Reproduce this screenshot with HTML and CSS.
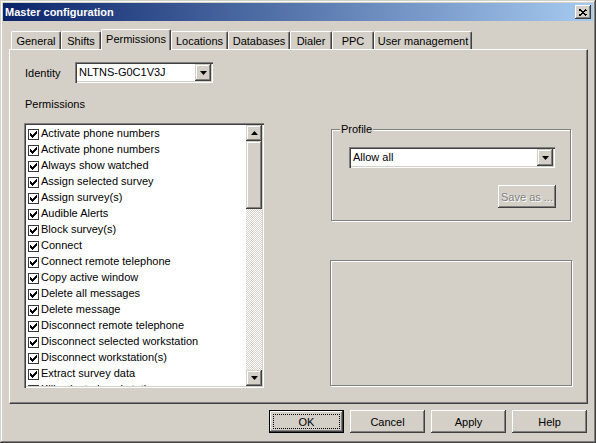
FILE: index.html
```html
<!DOCTYPE html>
<html>
<head>
<meta charset="utf-8">
<title>Master configuration</title>
<link rel="stylesheet" href="styles.css">
</head>
<body>
<div class="window">
  <div class="titlebar">
    <span class="title">Master configuration</span>
    <div class="close">
      <svg width="8" height="7" viewBox="0 0 8 7"><path d="M0.5 0.5 L7.5 6.5 M7.5 0.5 L0.5 6.5" stroke="#000" stroke-width="1.6" fill="none"/></svg>
    </div>
  </div>
  <div class="body">
    <div class="tabs">
      <div class="tab w-general">General</div>
      <div class="tab w-shifts">Shifts</div>
      <div class="tab active w-perm">Permissions</div>
      <div class="tab w-loc">Locations</div>
      <div class="tab w-db">Databases</div>
      <div class="tab w-dialer">Dialer</div>
      <div class="tab w-ppc">PPC</div>
      <div class="tab w-user">User management</div>
    </div>
    <div class="panel">
      <div class="left">
        <div class="identity">
          <span class="lbl">Identity</span>
          <div class="combo combo-id">
            <span class="val">NLTNS-G0C1V3J</span>
            <span class="drop"><svg width="7" height="4" viewBox="0 0 7 4"><polygon points="0,0 7,0 3.5,4" fill="#000"/></svg></span>
          </div>
        </div>
        <div class="perm-label">Permissions</div>
        <div class="listbox">
          <ul class="items">
            <li class="item"><span class="cb"><svg width="7" height="7" viewBox="0 0 7 7"><polygon points="0,2 2,4 7,-1 7,2 2,7 0,5" fill="#000"/></svg></span>Activate phone numbers</li>
            <li class="item"><span class="cb"><svg width="7" height="7" viewBox="0 0 7 7"><polygon points="0,2 2,4 7,-1 7,2 2,7 0,5" fill="#000"/></svg></span>Activate phone numbers</li>
            <li class="item"><span class="cb"><svg width="7" height="7" viewBox="0 0 7 7"><polygon points="0,2 2,4 7,-1 7,2 2,7 0,5" fill="#000"/></svg></span>Always show watched</li>
            <li class="item"><span class="cb"><svg width="7" height="7" viewBox="0 0 7 7"><polygon points="0,2 2,4 7,-1 7,2 2,7 0,5" fill="#000"/></svg></span>Assign selected survey</li>
            <li class="item"><span class="cb"><svg width="7" height="7" viewBox="0 0 7 7"><polygon points="0,2 2,4 7,-1 7,2 2,7 0,5" fill="#000"/></svg></span>Assign survey(s)</li>
            <li class="item"><span class="cb"><svg width="7" height="7" viewBox="0 0 7 7"><polygon points="0,2 2,4 7,-1 7,2 2,7 0,5" fill="#000"/></svg></span>Audible Alerts</li>
            <li class="item"><span class="cb"><svg width="7" height="7" viewBox="0 0 7 7"><polygon points="0,2 2,4 7,-1 7,2 2,7 0,5" fill="#000"/></svg></span>Block survey(s)</li>
            <li class="item"><span class="cb"><svg width="7" height="7" viewBox="0 0 7 7"><polygon points="0,2 2,4 7,-1 7,2 2,7 0,5" fill="#000"/></svg></span>Connect</li>
            <li class="item"><span class="cb"><svg width="7" height="7" viewBox="0 0 7 7"><polygon points="0,2 2,4 7,-1 7,2 2,7 0,5" fill="#000"/></svg></span>Connect remote telephone</li>
            <li class="item"><span class="cb"><svg width="7" height="7" viewBox="0 0 7 7"><polygon points="0,2 2,4 7,-1 7,2 2,7 0,5" fill="#000"/></svg></span>Copy active window</li>
            <li class="item"><span class="cb"><svg width="7" height="7" viewBox="0 0 7 7"><polygon points="0,2 2,4 7,-1 7,2 2,7 0,5" fill="#000"/></svg></span>Delete all messages</li>
            <li class="item"><span class="cb"><svg width="7" height="7" viewBox="0 0 7 7"><polygon points="0,2 2,4 7,-1 7,2 2,7 0,5" fill="#000"/></svg></span>Delete message</li>
            <li class="item"><span class="cb"><svg width="7" height="7" viewBox="0 0 7 7"><polygon points="0,2 2,4 7,-1 7,2 2,7 0,5" fill="#000"/></svg></span>Disconnect remote telephone</li>
            <li class="item"><span class="cb"><svg width="7" height="7" viewBox="0 0 7 7"><polygon points="0,2 2,4 7,-1 7,2 2,7 0,5" fill="#000"/></svg></span>Disconnect selected workstation</li>
            <li class="item"><span class="cb"><svg width="7" height="7" viewBox="0 0 7 7"><polygon points="0,2 2,4 7,-1 7,2 2,7 0,5" fill="#000"/></svg></span>Disconnect workstation(s)</li>
            <li class="item"><span class="cb"><svg width="7" height="7" viewBox="0 0 7 7"><polygon points="0,2 2,4 7,-1 7,2 2,7 0,5" fill="#000"/></svg></span>Extract survey data</li>
            <li class="item"><span class="cb"><svg width="7" height="7" viewBox="0 0 7 7"><polygon points="0,2 2,4 7,-1 7,2 2,7 0,5" fill="#000"/></svg></span>Kill selected workstation</li>
          </ul>
          <div class="scroll">
            <div class="sbtn"><svg width="7" height="4" viewBox="0 0 7 4"><polygon points="0,4 7,4 3.5,0" fill="#000"/></svg></div>
            <div class="thumb"></div>
            <div class="track"></div>
            <div class="sbtn"><svg width="7" height="4" viewBox="0 0 7 4"><polygon points="0,0 7,0 3.5,4" fill="#000"/></svg></div>
          </div>
        </div>
      </div>
      <div class="right">
        <fieldset class="group">
          <legend>Profile</legend>
          <div class="group-inner">
            <div class="combo combo-profile">
              <span class="val">Allow all</span>
              <span class="drop"><svg width="7" height="4" viewBox="0 0 7 4"><polygon points="0,0 7,0 3.5,4" fill="#000"/></svg></span>
            </div>
            <div class="btn btn-save disabled">Save as ...</div>
          </div>
        </fieldset>
        <div class="etched"></div>
      </div>
    </div>
    <div class="buttons">
      <div class="btn default"><span class="focus">OK</span></div>
      <div class="btn">Cancel</div>
      <div class="btn">Apply</div>
      <div class="btn">Help</div>
    </div>
  </div>
</div>
</body>
</html>
```

FILE: styles.css
```css
* { box-sizing: border-box; }
html, body { margin: 0; padding: 0; }
body {
  width: 596px;
  height: 443px;
  overflow: hidden;
  background: #d4d0c8;
  font: 11px "Liberation Sans", Arial, sans-serif;
  color: #000;
}

.window {
  width: 596px;
  height: 443px;
  padding: 3px;
  display: flex;
  flex-direction: column;
  background: #d4d0c8;
  box-shadow: inset -1px -1px #404040, inset 1px 1px #d4d0c8, inset -2px -2px #808080, inset 2px 2px #fff;
}

.titlebar {
  height: 18px;
  flex: none;
  display: flex;
  align-items: center;
  padding: 0 2px;
  background: linear-gradient(to right, #0a246a, #a6caf0);
}
.title {
  flex: 1;
  color: #fff;
  font-weight: bold;
  line-height: 18px;
}
.close {
  width: 16px;
  height: 14px;
  display: flex;
  align-items: center;
  justify-content: center;
  background: #d4d0c8;
  box-shadow: inset -1px -1px #404040, inset 1px 1px #fff, inset -2px -2px #808080, inset 2px 2px #d4d0c8;
}
.close svg { display: block; shape-rendering: crispEdges; }

.body {
  flex: 1;
  display: flex;
  flex-direction: column;
  padding: 8px 5px 0 6px;
}

/* tabs */
.tabs {
  height: 20px;
  flex: none;
  display: flex;
  align-items: flex-end;
  padding-left: 2px;
}
.tab {
  height: 18px;
  border-top: 1px solid #fff;
  border-left: 1px solid #fff;
  border-right: 1px solid #404040;
  border-radius: 2px 2px 0 0;
  box-shadow: inset -1px 0 #808080;
  text-align: center;
  line-height: 18px;
  white-space: nowrap;
  background: #d4d0c8;
}
.tab.active {
  height: 21px;
  margin-bottom: -1px;
  line-height: 18px;
  position: relative;
  z-index: 1;
}
.w-general { width: 50px; }
.w-shifts { width: 40px; }
.w-perm { width: 70px; }
.w-loc { width: 57px; }
.w-db { width: 62px; }
.w-dialer { width: 42px; }
.w-ppc { width: 42px; }
.w-user { width: 98px; }

/* panel */
.panel {
  height: 355px;
  flex: none;
  display: flex;
  padding: 12px 0 0 14px;
  border: 1px solid;
  border-color: #fff #404040 #404040 #fff;
  box-shadow: inset -1px -1px #808080;
}
.left {
  width: 240px;
  flex: none;
  display: flex;
  flex-direction: column;
}
.identity {
  height: 21px;
  display: flex;
  align-items: center;
}
.identity .lbl {
  width: 51px;
  padding-left: 1px;
}

.combo {
  height: 21px;
  display: flex;
  padding: 2px;
  background: #fff;
  box-shadow: inset 1px 1px #808080, inset 2px 2px #404040, inset -1px -1px #fff, inset -2px -2px #d4d0c8;
}
.combo-id { width: 138px; }
.combo .val {
  flex: 1;
  padding-left: 2px;
  line-height: 17px;
  white-space: nowrap;
  overflow: hidden;
}
.combo .drop {
  width: 16px;
  height: 17px;
  display: flex;
  align-items: center;
  justify-content: center;
  background: #d4d0c8;
  box-shadow: inset -1px -1px #404040, inset 1px 1px #d4d0c8, inset -2px -2px #808080, inset 2px 2px #fff;
}
svg { display: block; }

.perm-label {
  margin-top: 14px;
  line-height: 14px;
  padding-left: 1px;
}

.listbox {
  margin-top: 12px;
  height: 265px;
  display: flex;
  padding: 2px;
  background: #fff;
  box-shadow: inset 1px 1px #808080, inset 2px 2px #404040, inset -1px -1px #fff, inset -2px -2px #d4d0c8;
}
.items {
  flex: 1;
  margin: 0;
  padding: 0;
  list-style: none;
  overflow: hidden;
}
.item {
  height: 16px;
  display: flex;
  align-items: center;
  padding-left: 2px;
  white-space: nowrap;
}
.cb {
  width: 11px;
  height: 11px;
  flex: none;
  margin-right: 2px;
  margin-top: 2px;
  display: flex;
  align-items: center;
  justify-content: center;
  background: #fff;
  border: 1px solid #3a3a3a;
}
.cb svg { shape-rendering: crispEdges; }

.scroll {
  width: 16px;
  flex: none;
  display: flex;
  flex-direction: column;
}
.sbtn {
  height: 16px;
  flex: none;
  display: flex;
  align-items: center;
  justify-content: center;
  background: #d4d0c8;
  box-shadow: inset -1px -1px #404040, inset 1px 1px #d4d0c8, inset -2px -2px #808080, inset 2px 2px #fff;
}
.thumb {
  height: 68px;
  flex: none;
  background: #d4d0c8;
  box-shadow: inset -1px -1px #404040, inset 1px 1px #d4d0c8, inset -2px -2px #808080, inset 2px 2px #fff;
}
.track {
  flex: 1;
  background: conic-gradient(#fff 0 25%, #d4d0c8 0 50%, #fff 0 75%, #d4d0c8 0) 0 0 / 2px 2px;
}

/* right column */
.right {
  margin-left: 66px;
  width: 243px;
  flex: none;
  display: flex;
  flex-direction: column;
  padding-top: 61px;
}
.group {
  margin: 0 0 0 1px;
  padding: 0;
  width: 240px;
  height: 98px;
  border: 1px solid #808080;
  box-shadow: inset 1px 1px #fff, 1px 1px #fff;
}
.group legend {
  margin-left: 8px;
  padding: 0 1px;
  line-height: 13px;
  background: #d4d0c8;
}
.group-inner {
  display: flex;
  flex-direction: column;
  align-items: flex-end;
  padding: 11px 15px 0 17px;
}
.combo-profile { width: 206px; align-self: stretch; }
.etched {
  margin-top: 39px;
  width: 242px;
  height: 126px;
  border: 1px solid #808080;
  box-shadow: inset 1px 1px #fff, 1px 1px #fff;
}

/* buttons */
.btn {
  width: 75px;
  height: 23px;
  display: flex;
  align-items: center;
  justify-content: center;
  background: #d4d0c8;
  box-shadow: inset -1px -1px #404040, inset 1px 1px #fff, inset -2px -2px #808080, inset 2px 2px #d4d0c8;
  white-space: nowrap;
}
.btn.btn-save {
  margin-top: 17px;
  margin-right: -1px;
  width: 58px;
}
.btn.disabled {
  color: #808080;
  text-shadow: 1px 1px #fff;
}
.btn.default {
  border: 1px solid #000;
  padding: 3px;
}
.focus {
  flex: 1;
  align-self: stretch;
  display: flex;
  align-items: center;
  justify-content: center;
  border: 1px dotted #000;
}
.buttons {
  margin-top: 6px;
  display: flex;
  justify-content: flex-end;
  gap: 6px;
  padding-right: 1px;
}
```
